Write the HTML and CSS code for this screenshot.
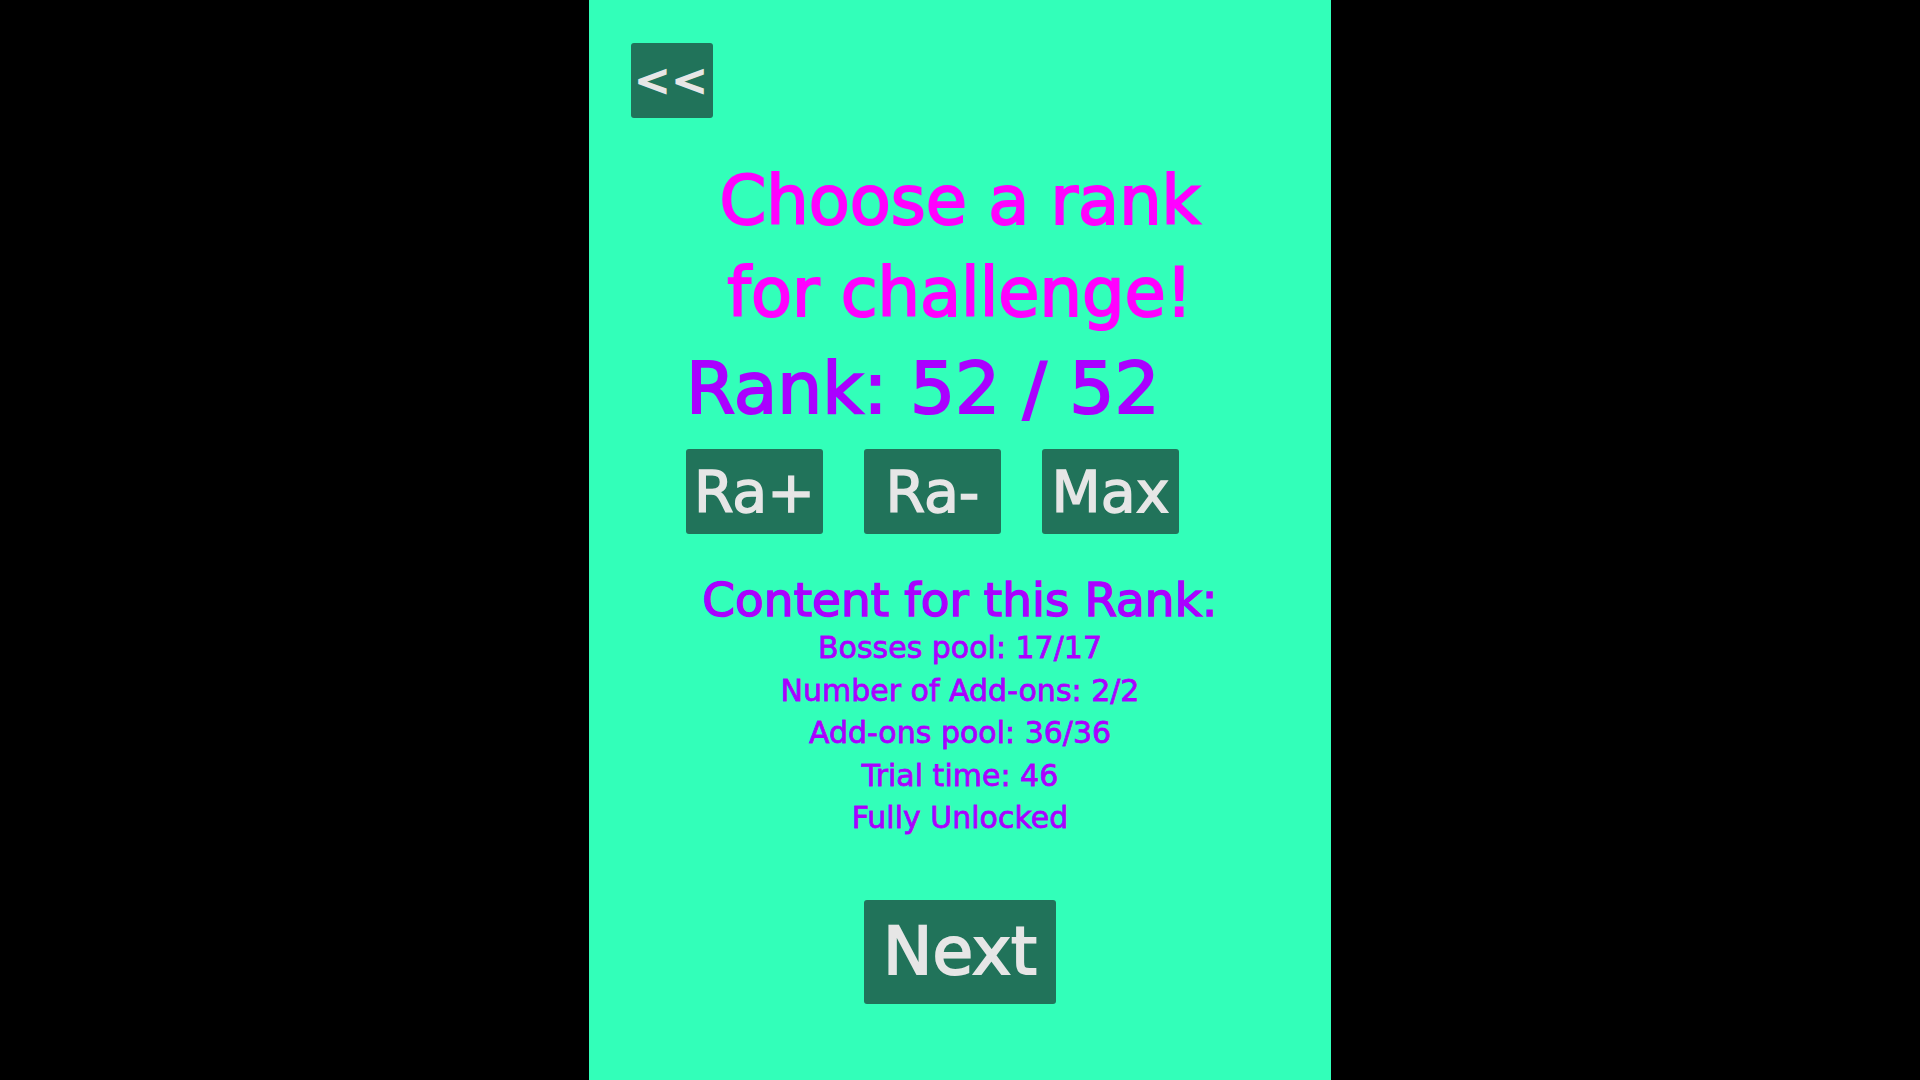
FILE: index.html
```html
<!DOCTYPE html>
<html lang="en">
<head>
<meta charset="utf-8">
<title>Choose a rank</title>
<link rel="stylesheet" href="styles.css">
</head>
<body>
<main class="panel">
  <div class="top-bar">
    <button class="btn back-btn">&lt;&lt;</button>
  </div>
  <h1 class="title">Choose a rank<br>for challenge!</h1>
  <div class="rank-area">
    <div class="rank-value">Rank: 52 / 52</div>
    <div class="rank-buttons">
      <button class="btn rank-btn">Ra+</button>
      <button class="btn rank-btn">Ra-</button>
      <button class="btn rank-btn">Max</button>
    </div>
  </div>
  <section class="content">
    <h2 class="content-title">Content for this Rank:</h2>
    <ul class="content-list">
      <li>Bosses pool: 17/17</li>
      <li>Number of Add-ons: 2/2</li>
      <li>Add-ons pool: 36/36</li>
      <li>Trial time: 46</li>
      <li>Fully Unlocked</li>
    </ul>
  </section>
  <div class="next-row">
    <button class="btn next-btn">Next</button>
  </div>
</main>
</body>
</html>
```

FILE: styles.css
```css
html, body {
  margin: 0;
  padding: 0;
  height: 100%;
}

body {
  background: #000000;
  display: flex;
  justify-content: center;
  font-family: "DejaVu Sans", "Liberation Sans", sans-serif;
  overflow: hidden;
}

.panel {
  width: 742px;
  height: 1080px;
  background: #32ffb9;
  display: flex;
  flex-direction: column;
  box-sizing: border-box;
}

.btn {
  background: #21735a;
  color: #e6e6e6;
  border: none;
  border-radius: 3px;
  font-family: "DejaVu Sans", "Liberation Sans", sans-serif;
  padding: 0;
  display: flex;
  align-items: center;
  justify-content: center;
  cursor: pointer;
  -webkit-text-stroke: 1.5px #e6e6e6;
}

.top-bar {
  padding: 43px 0 0 42px;
  display: flex;
}

.back-btn {
  width: 82px;
  height: 75px;
  font-size: 42px;
  letter-spacing: 2px;
  -webkit-text-stroke: 2px #e6e6e6;
}

.title {
  margin: 37px 0 0;
  font-size: 67px;
  line-height: 92px;
  font-weight: normal;
  color: #ff00ff;
  text-align: center;
  -webkit-text-stroke: 2px #ff00ff;
}

.rank-area {
  padding-left: 97px;
  display: flex;
  flex-direction: column;
}

.rank-value {
  margin-top: 10px;
  font-size: 71px;
  line-height: 80px;
  color: #aa00ff;
  -webkit-text-stroke: 2px #aa00ff;
}

.rank-buttons {
  margin-top: 20px;
  display: flex;
  gap: 41px;
}

.rank-btn {
  width: 137px;
  height: 85px;
  font-size: 57px;
}

.content {
  margin-top: 38px;
  text-align: center;
  color: #aa00ff;
}

.content-title {
  margin: 0;
  font-size: 47px;
  line-height: 56px;
  font-weight: normal;
  -webkit-text-stroke: 1.5px #aa00ff;
}

.content-list {
  list-style: none;
  margin: -1px 0 0;
  padding: 0;
  font-size: 30px;
  line-height: 42.5px;
  -webkit-text-stroke: 0.8px #aa00ff;
}

.next-row {
  margin-top: 60px;
  display: flex;
  justify-content: center;
}

.next-btn {
  width: 192px;
  height: 104px;
  font-size: 66px;
  -webkit-text-stroke: 2px #e6e6e6;
}
```
